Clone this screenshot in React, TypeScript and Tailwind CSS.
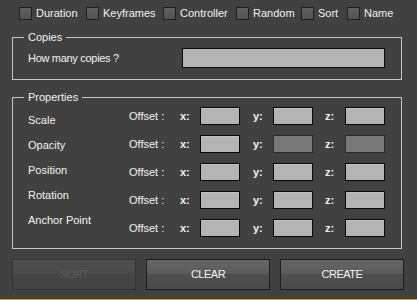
import React from "react";

const FONT = "font-['Liberation_Sans',Arial,sans-serif]";

const toggles = [
  { label: "Duration", w: "w-[67px]" },
  { label: "Keyframes", w: "w-[77px]" },
  { label: "Controller", w: "w-[73px]" },
  { label: "Random", w: "w-[65px]" },
  { label: "Sort", w: "w-[46px]" },
  { label: "Name", w: "w-[50px]" },
];

const props = ["Scale", "Opacity", "Position", "Rotation", "Anchor Point"];

function Box() {
  return (
    <span className="h-[13px] w-[13px] shrink-0 border border-[#1f1f1f] bg-[linear-gradient(to_bottom,#606060,#525252)]" />
  );
}

function Field({ disabled = false }: { disabled?: boolean }) {
  return (
    <span
      className={
        disabled
          ? "h-[18px] w-[40px] border border-[#2c2c2c] bg-[#787878]"
          : "h-[18px] w-[40px] border border-[#0a0a0a] bg-[#b4b4b4] shadow-[inset_0_1px_0_#c2c2c2]"
      }
    />
  );
}

function Group({
  title,
  className,
  children,
}: {
  title: string;
  className: string;
  children: React.ReactNode;
}) {
  return (
    <div className={`relative mx-[12px] w-[390px] border border-[#c6c6c6] ${className}`}>
      {/* legend sits over the top border */}
      <span className="absolute -top-[8px] left-[11px] bg-[#414141] px-[4px] text-[11px] leading-[14px] text-[#f2f2f2]">
        {title}
      </span>
      {children}
    </div>
  );
}

export default function App() {
  return (
    <div className={`flex h-[300px] w-[417px] flex-col bg-[#414141] text-[11px] text-[#f2f2f2] ${FONT}`}>
      <div className="flex h-[25px] items-center pl-[19px] pt-[1px]">
        {toggles.map((t) => (
          <label key={t.label} className={`flex items-center gap-[4px] ${t.w}`}>
            <Box />
            <span className="leading-[13px]">{t.label}</span>
          </label>
        ))}
      </div>

      <Group title="Copies" className="mt-[12px] h-[43px]">
        <div className="flex items-center pl-[15px] pt-[10px]">
          <span className="w-[154px] tracking-[-0.3px]">How many copies ?</span>
          <span className="h-[20px] w-[203px] border border-[#0a0a0a] bg-[#b4b4b4]" />
        </div>
      </Group>

      <Group title="Properties" className="mt-[17px] h-[152px]">
        <div className="flex">
          <div className="flex w-[116px] flex-col pl-[15px] pt-[10px] leading-[25px]">
            {props.map((p) => (
              <span key={p}>{p}</span>
            ))}
          </div>
          <div className="flex flex-col gap-[10px] pt-[9px]">
            {props.map((p) => (
              <div key={p} className="flex h-[18px] items-center">
                <span className="w-[51px]">Offset :</span>
                <span className="w-[20px] font-bold">x:</span>
                <Field />
                <span className="ml-[13px] w-[20px] font-bold">y:</span>
                <Field disabled={p === "Opacity"} />
                <span className="ml-[12px] w-[20px] font-bold">z:</span>
                <Field disabled={p === "Opacity"} />
              </div>
            ))}
          </div>
        </div>
      </Group>

      <div className="mt-[10px] flex gap-[10px] pl-[12px]">
        <button className="h-[31px] w-[124px] border border-[#333333] bg-[linear-gradient(to_bottom,#4e4e4e,#4a4a4a_50%,#454545_50%,#434343)] text-[11px] tracking-[-0.5px] text-[#5c5c5c]">
          SORT
        </button>
        <button className="h-[31px] w-[124px] border border-[#1c1c1c] bg-[linear-gradient(to_bottom,#666666,#5a5a5a_50%,#4e4e4e_50%,#4a4a4a)] text-[11px] tracking-[-0.5px] text-[#f4f4f4]">
          CLEAR
        </button>
        <button className="h-[31px] w-[124px] border border-[#1c1c1c] bg-[linear-gradient(to_bottom,#666666,#5a5a5a_50%,#4e4e4e_50%,#4a4a4a)] text-[11px] tracking-[-0.5px] text-[#f4f4f4]">
          CREATE
        </button>
      </div>

      <div className="mt-auto h-[1px] bg-[#d0a021]" />
    </div>
  );
}
